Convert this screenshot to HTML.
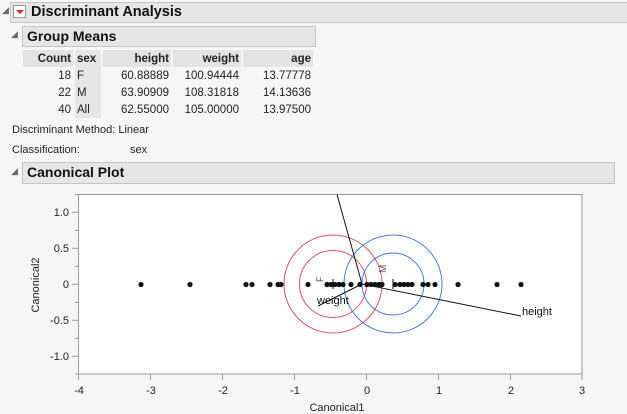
<!DOCTYPE html>
<html><head><meta charset="utf-8"><style>
body{margin:0;width:627px;height:414px;background:#f6f6f6;font-family:"Liberation Sans",sans-serif;font-size:11px;color:#222;position:relative;overflow:hidden}
.bar{position:absolute;background:#e6e6e6;border:1px solid #c4c4c4;font-weight:bold;font-size:14px;color:#111;box-sizing:border-box;line-height:19px;padding-left:4px}
.tri{position:absolute;font-size:9px;color:#666}
.t{position:absolute;white-space:nowrap}
table{position:absolute;left:21px;top:50px;border-collapse:separate;border-spacing:2px 0}
td{padding:0 2px;height:17px;text-align:right;font-size:11.5px}
th{background:#e3e3e3;padding:0 2px;height:17px;text-align:right;font-size:11.5px}
.s{background:#e6e6e6;text-align:left}
</style></head><body>
<div class="tri" style="left:2px;top:5px">&#9698;</div>
<div class="bar" style="left:10px;top:2px;width:617px;height:21px;border-right:none;padding-left:20px;font-size:14.5px">Discriminant Analysis</div>
<div style="position:absolute;left:13px;top:5px;width:13px;height:13px;background:#fff;border:1px solid #999;box-sizing:border-box"><div style="position:absolute;left:2px;top:4px;width:0;height:0;border-left:4px solid transparent;border-right:4px solid transparent;border-top:4px solid #d22"></div></div>
<div class="tri" style="left:11px;top:29px">&#9698;</div>
<div class="bar" style="left:22px;top:26px;width:294px;height:21px">Group Means</div>
<table>
<tr><th style="width:46px">Count</th><th class="s" style="width:22px">sex</th><th style="width:64px">height</th><th style="width:64px">weight</th><th style="width:66px">age</th></tr>
<tr><td>18</td><td class="s">F</td><td>60.88889</td><td>100.94444</td><td>13.77778</td></tr>
<tr><td>22</td><td class="s">M</td><td>63.90909</td><td>108.31818</td><td>14.13636</td></tr>
<tr><td>40</td><td class="s">All</td><td>62.55000</td><td>105.00000</td><td>13.97500</td></tr>
</table>
<div class="t" style="left:12px;top:124px">Discriminant Method: Linear</div>
<div class="t" style="left:12px;top:144px">Classification:</div>
<div class="t" style="left:130px;top:144px">sex</div>
<div class="tri" style="left:11px;top:166px">&#9698;</div>
<div class="bar" style="left:22px;top:162px;width:593px;height:22px">Canonical Plot</div>
<svg style="position:absolute;left:0;top:0" width="627" height="414" font-family="Liberation Sans,sans-serif" font-size="11">
<rect x="78.5" y="194.5" width="503.5" height="179.5" fill="#fff" stroke="#999"/>
<g stroke="#999">
<line x1="72" y1="212.3" x2="78" y2="212.3"/><line x1="72" y1="248.3" x2="78" y2="248.3"/><line x1="72" y1="284.3" x2="78" y2="284.3"/><line x1="72" y1="320.3" x2="78" y2="320.3"/><line x1="72" y1="356.3" x2="78" y2="356.3"/>
<line x1="75" y1="230.3" x2="78" y2="230.3"/><line x1="75" y1="266.3" x2="78" y2="266.3"/><line x1="75" y1="302.3" x2="78" y2="302.3"/><line x1="75" y1="338.3" x2="78" y2="338.3"/><line x1="75" y1="194.5" x2="78" y2="194.5"/><line x1="75" y1="374" x2="78" y2="374"/>
<line x1="78.5" y1="374" x2="78.5" y2="380"/><line x1="150.5" y1="374" x2="150.5" y2="380"/><line x1="222.5" y1="374" x2="222.5" y2="380"/><line x1="294.5" y1="374" x2="294.5" y2="380"/><line x1="366.5" y1="374" x2="366.5" y2="380"/><line x1="438.5" y1="374" x2="438.5" y2="380"/><line x1="510.5" y1="374" x2="510.5" y2="380"/><line x1="582" y1="374" x2="582" y2="380"/>
</g>
<g fill="#222" text-anchor="end">
<text x="69" y="216">1.0</text><text x="69" y="252">0.5</text><text x="69" y="288">0</text><text x="69" y="324">-0.5</text><text x="69" y="360">-1.0</text>
</g>
<g fill="#222" text-anchor="middle">
<text x="79" y="394">-4</text><text x="151" y="394">-3</text><text x="223" y="394">-2</text><text x="295" y="394">-1</text><text x="367" y="394">0</text><text x="439" y="394">1</text><text x="511" y="394">2</text><text x="582" y="394">3</text>
<text x="337" y="411">Canonical1</text>
<text transform="translate(39,285) rotate(-90)">Canonical2</text>
</g>
<g fill="none" stroke-width="1">
<circle cx="333" cy="284" r="49" stroke="#d9505e"/><circle cx="333" cy="284" r="33.5" stroke="#d9505e"/>
<circle cx="393" cy="284" r="49" stroke="#4a7ae0"/><circle cx="393" cy="284" r="31" stroke="#4a7ae0"/>
</g>
<g stroke="#111" fill="none">
<line x1="362" y1="284" x2="337" y2="194.5"/>
<line x1="362" y1="284" x2="521" y2="316"/>
<line x1="362" y1="284" x2="318" y2="306"/>
<line x1="333" y1="279" x2="333" y2="289"/><line x1="393" y1="279" x2="393" y2="289"/>
</g>
<g fill="#111">
<circle cx="141" cy="284.5" r="2.6"/><circle cx="190" cy="284.5" r="2.6"/><circle cx="246" cy="284.5" r="2.6"/><circle cx="252" cy="284.5" r="2.6"/>
<circle cx="270" cy="284.5" r="2.6"/><circle cx="278" cy="284.5" r="2.6"/><circle cx="281" cy="284.5" r="2.6"/><circle cx="308" cy="284.5" r="2.6"/>
<circle cx="327" cy="284.5" r="2.6"/><circle cx="331" cy="284.5" r="2.6"/><circle cx="335" cy="284.5" r="2.6"/><circle cx="339" cy="284.5" r="2.6"/><circle cx="343" cy="284.5" r="2.6"/>
<circle cx="351" cy="284.5" r="2.6"/><circle cx="360" cy="284.5" r="2.6"/><circle cx="367" cy="284.5" r="2.6"/><circle cx="371" cy="284.5" r="2.6"/><circle cx="375" cy="284.5" r="2.6"/><circle cx="379" cy="284.5" r="2.6"/><circle cx="382" cy="284.5" r="2.6"/>
<circle cx="395" cy="284.5" r="2.6"/><circle cx="400" cy="284.5" r="2.6"/><circle cx="404" cy="284.5" r="2.6"/><circle cx="408" cy="284.5" r="2.6"/><circle cx="412" cy="284.5" r="2.6"/>
<circle cx="423" cy="284.5" r="2.6"/><circle cx="428" cy="284.5" r="2.6"/><circle cx="435" cy="284.5" r="2.6"/><circle cx="458" cy="284.5" r="2.6"/><circle cx="497" cy="284.5" r="2.6"/><circle cx="521" cy="284.5" r="2.6"/>
</g>
<text x="317" y="304" fill="#111">weight</text>
<text x="522" y="315" fill="#111">height</text>
<text transform="translate(323,282) rotate(-90)" fill="#555" font-size="9">F</text>
<text transform="translate(386,273) rotate(-90)" fill="#555" font-size="10">M</text>
</svg>
</body></html>
